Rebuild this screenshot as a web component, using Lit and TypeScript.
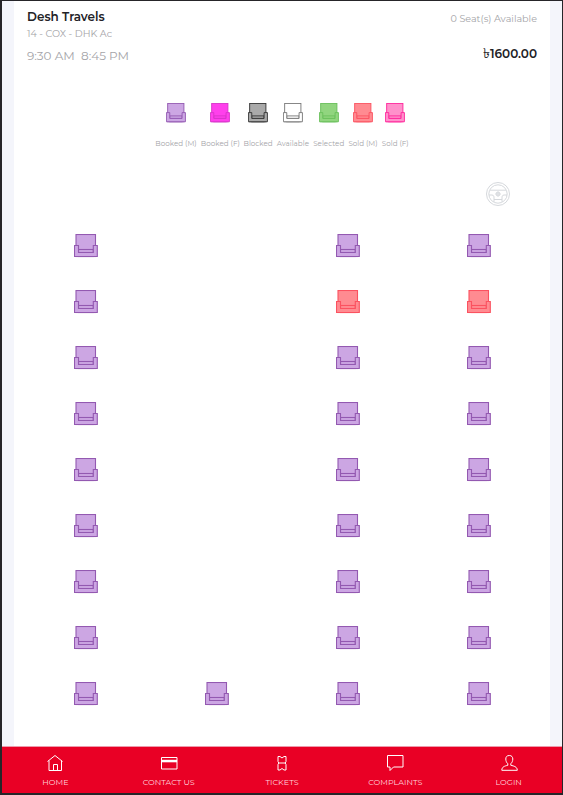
import { LitElement, html, svg, css } from "lit";
import { customElement, property } from "lit/decorators.js";

type Kind = "m" | "f" | "blocked" | "available" | "selected" | "soldm" | "soldf";

@customElement("seat-icon")
export class SeatIcon extends LitElement {
  @property({ reflect: true }) kind: Kind = "m";

  static styles = css`
    :host { display: block; width: 24px; height: 24px; --fill: #cca6e3; --line: #9359b1; }
    :host([kind="f"]) { --fill: #ff40ec; --line: #d735c9; }
    :host([kind="blocked"]) { --fill: #a9a9a9; --line: #333; }
    :host([kind="available"]) { --fill: #fff; --line: #777; }
    :host([kind="selected"]) { --fill: #91d57f; --line: #69bf5b; }
    :host([kind="soldm"]) { --fill: #ff8b91; --line: #fb5260; }
    :host([kind="soldf"]) { --fill: #ff91cb; --line: #ff269b; }
    svg { display: block; width: 100%; height: 100%; }
    .shape { fill: var(--fill); stroke: var(--line); stroke-width: 1.1; }
  `;

  render() {
    return html`<svg viewBox="0 0 24 24">
      <rect class="shape" x="2" y=".5" width="19.500" height="22"></rect>
      <rect class="shape" x="4.5" y="15.500" width="14.800" height="7"></rect>
      <path class="shape" d="M4.500 18.500h14.800"></path>
      <path class="shape" d="M.5 11.500h4v7h14.800v-7h4v11H.5z"></path>
    </svg>`;
  }
}

const legend: { kind: Kind; label: string; cls: string }[] = [
  { kind: "m", label: "Booked (M)", cls: "w42" },
  { kind: "f", label: "Booked (F)", cls: "w39" },
  { kind: "blocked", label: "Blocked", cls: "w29" },
  { kind: "available", label: "Available", cls: "w33" },
  { kind: "selected", label: "Selected", cls: "w31" },
  { kind: "soldm", label: "Sold (M)", cls: "w30" },
  { kind: "soldf", label: "Sold (F)", cls: "w27" },
];

const rows: (Kind | null)[][] = Array.from({ length: 9 }, (_, i) => {
  const right: Kind = i === 1 ? "soldm" : "m";
  return ["m", i === 8 ? "m" : null, right, right];
});

const tabs = [
  { label: "HOME", icon: svg`<path d="M2.500 8.500 10 2.500l7.500 6M4 7.500v10h12.500v-10M8.500 17.500v-6h4v6"/>` },
  { label: "CONTACT US", icon: svg`<path d="M2.500 4.500h15.500v11.500H2.500z"/><path class="solid" d="M2 6.800h16v2.500H2z"/>` },
  { label: "TICKETS", icon: svg`<path d="M6 3.500h2l2 1.500 2-1.500h2v5l-.8 1.500.8 1.500v5.500h-2l-2-1.500-2 1.500H6v-5.500l.8-1.500L6 8.500zM7 10h6"/>` },
  { label: "COMPLAINTS", icon: svg`<path d="M2.500 2.500h15.500v11.500H8.500l-3.500 3.500v-3.500H2.500z"/>` },
  { label: "LOGIN", icon: svg`<path d="M10.300 2.500c-2.600 0-3.500 1.600-3.500 3.500 0 2 .8 3.700 2 4.700v1.600c-3 .7-6 1.400-6 5h15.500c0-3.600-3.500-4.300-6.500-5v-1.600c1.200-1 2-2.700 2-4.700 0-1.900-1-3.500-3.500-3.500z"/>` },
];

@customElement("app-root")
export class AppRoot extends LitElement {
  static styles = css`
    :host { display: block; font-family: Montserrat, Inter, "Open Sans", sans-serif; color: #a4a4a8; }
    * { box-sizing: border-box; }
    .frame { height: 795px; display: flex; flex-direction: column; background: #f4f5fb; border: solid #262529; border-width: 1px 1px 2px 2px; overflow: hidden; }
    .page { flex: 1; min-height: 0; margin: 0 12px; background: #fff; }
    .head { height: 81px; padding: 0 13px; display: flex; justify-content: space-between; white-space: nowrap; }
    .name { margin-top: 7px; font-size: 12px; line-height: 17px; font-weight: 600; color: #222226; }
    .route { margin-top: 1px; font-size: 9.600px; line-height: 15px; }
    .time { margin-top: 7px; font-size: 12px; line-height: 16px; white-space: pre; }
    .right { text-align: right; }
    .seats { margin-top: 10px; font-size: 9.600px; line-height: 15px; }
    .price { margin-top: 19px; font-size: 12px; line-height: 17px; font-weight: 600; color: #222226; display: flex; justify-content: flex-end; }
    .taka { font-family: "DejaVu Sans", sans-serif; font-size: 14px; font-weight: 400; }
    .legend { height: 86px; padding: 21px 0 0 141px; display: flex; gap: 3.800px; }
    .entry { display: flex; flex-direction: column; align-items: center; }
    .entry seat-icon { width: 20px; height: 20px; margin-bottom: 15px; }
    .entry span { font-size: 7.200px; line-height: 11px; white-space: nowrap; }
    .w42 { width: 42px; } .w39 { width: 39px; } .w29 { width: 29px; } .w33 { width: 33px; }
    .w31 { width: 31px; } .w30 { width: 30px; } .w27 { width: 27px; }
    .wheel { height: 50px; padding: 13px 39px 0 0; display: flex; justify-content: flex-end; }
    .wheel svg { width: 26px; height: 26px; fill: none; stroke: #d5d8dc; }
    .grid { display: grid; grid-template-columns: repeat(4, 131px); grid-auto-rows: 56px; margin-left: 6px; }
    .cell { display: flex; justify-content: center; padding-top: 16px; }
    .nav { height: 47px; flex: none; display: grid; grid-template-columns: repeat(5, 113.300px); justify-content: center; border-top: 1px solid #ed9aab; background: #e90025; color: #fff; }
    .tab { display: flex; flex-direction: column; align-items: center; padding: 6px 0 0; }
    .tab svg { width: 20px; height: 20px; fill: none; stroke: #fff; stroke-width: 1; }
    .tab .solid { fill: #fff; stroke: none; }
    .tab span { margin-top: 4px; font-size: 8px; line-height: 11px; color: #ffd5dc; white-space: nowrap; }
  `;

  render() {
    return html`<div class="frame">
      <main class="page">
        <header class="head">
          <div>
            <div class="name">Desh Travels</div>
            <div class="route">14 - COX - DHK Ac</div>
            <div class="time">9:30 AM  8:45 PM</div>
          </div>
          <div class="right">
            <div class="seats">0 Seat(s) Available</div>
            <div class="price"><span class="taka">৳</span><span>1600.00</span></div>
          </div>
        </header>
        <div class="legend">
          ${legend.map((l) => html`<div class="entry ${l.cls}"><seat-icon kind=${l.kind}></seat-icon><span>${l.label}</span></div>`)}
        </div>
        <div class="wheel">
          <svg viewBox="0 0 26 26">
            <circle cx="13" cy="13" r="11.500"></circle>
            <circle cx="13" cy="13" r="9.200"></circle>
            <circle cx="13" cy="13" r="2"></circle>
            <path d="M5 9.200h16M4 14h3c2 0 2 2 2 3v4M22 14h-3c-2 0-2 2-2 3v4M9 18.500h8M13 10.500v5M10.500 13h5"></path>
          </svg>
        </div>
        <section class="grid">
          ${rows.flat().map((k) => html`<div class="cell">${k ? html`<seat-icon kind=${k}></seat-icon>` : null}</div>`)}
        </section>
      </main>
      <nav class="nav">
        ${tabs.map((t) => html`<div class="tab"><svg viewBox="0 0 20 20">${t.icon}</svg><span>${t.label}</span></div>`)}
      </nav>
    </div>`;
  }
}
